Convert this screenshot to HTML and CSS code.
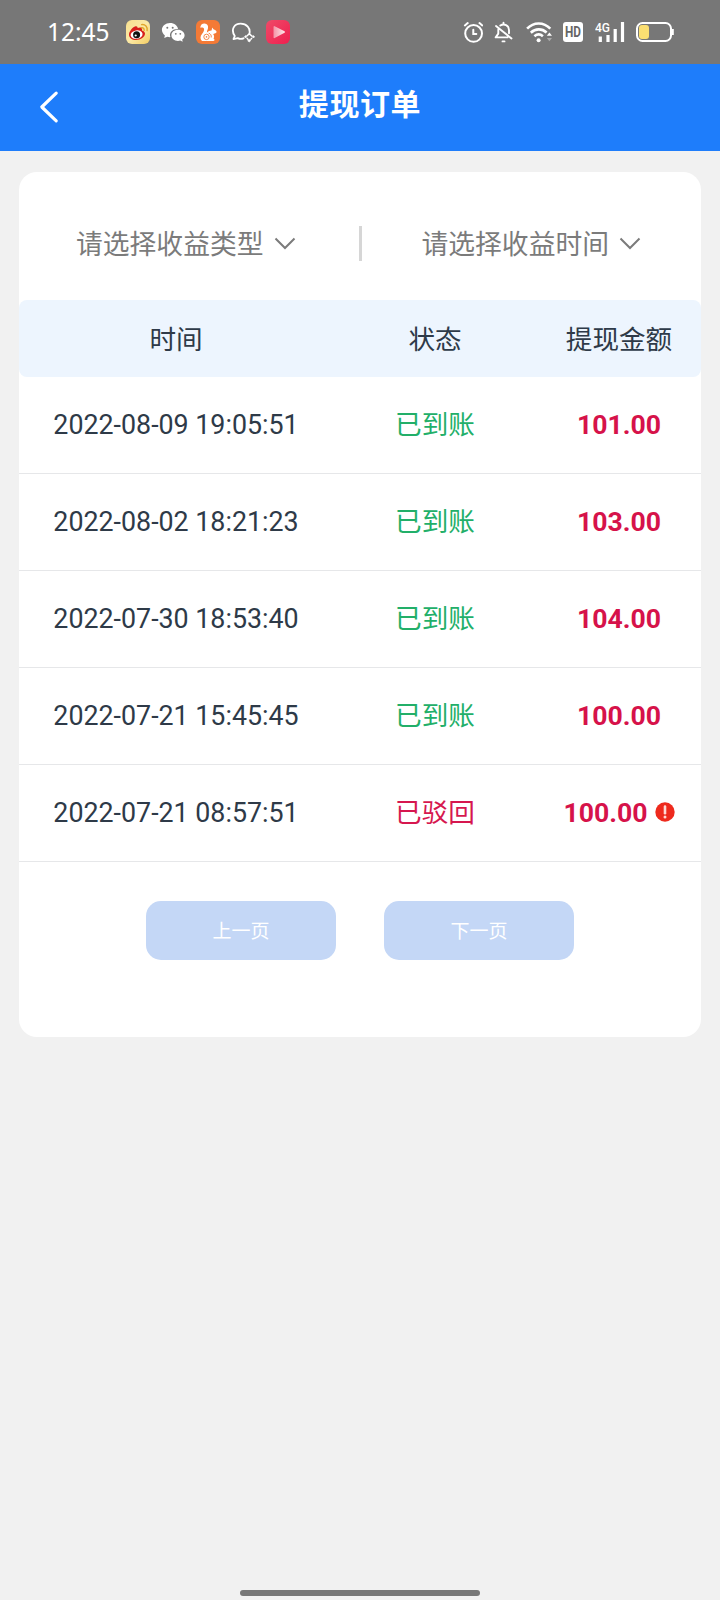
FILE: index.html
```html
<!DOCTYPE html>
<html lang="zh-CN">
<head>
<meta charset="utf-8">
<title>提现订单</title>
<link rel="stylesheet" href="styles.css">
</head>
<body>
<div class="status-bar">
  <span class="clock">12:45</span>
  <div class="apps">
    <svg width="24" height="24" viewBox="0 0 24 24">
      <defs><linearGradient id="gold" x1="0" y1="0" x2="1" y2="1"><stop offset="0" stop-color="#f8df8f"/><stop offset=".5" stop-color="#fbe9a6"/><stop offset="1" stop-color="#f3cc62"/></linearGradient></defs>
      <rect width="24" height="24" rx="6" fill="url(#gold)"/>
      <path d="M9 6.400c1.800-.6 2.800.1 2.600 1.700 2.300-.9 4.600-.7 4.500 1.300 0 .5-.1.7-.2 1 2 .6 3.100 1.700 3.100 3.200 0 3.500-4.300 6.400-8.800 6.400C6 20 3 17.700 3 14.700 3 11.600 6 7.600 9 6.400z" fill="#d81e1b"/>
      <ellipse cx="10.600" cy="14.600" rx="6" ry="4.200" fill="#fff" transform="rotate(-8 10.600 14.600)"/>
      <circle cx="10.600" cy="14.700" r="3.500" fill="#111"/>
      <circle cx="9.700" cy="15.500" r="1.100" fill="#fff"/>
      <path d="M15.500 7.800c1.600-.3 2.900.9 2.600 2.600M15.600 4.600c3.700-.5 6.200 2.200 5.500 6" fill="none" stroke="#e0a52b" stroke-width="1.400" stroke-linecap="round"/>
    </svg>
    <svg width="24" height="24" viewBox="0 0 24 24">
      <path d="M9 2.900c4.300 0 7.700 2.600 8 6.100-4.600-.3-8.300 2.600-8 6.600.1.600.2 1 .4 1.500-1 .1-2-.1-3-.4L3.200 18l.7-2.600C2 14 .9 12 .9 9.800.9 6 4.500 2.900 9 2.900z" fill="#fff"/>
      <path d="M17 9.800c3.700 0 6.600 2.500 6.600 5.500 0 1.800-.9 3.300-2.400 4.300l.5 2.200-2.500-1.200c-.7.200-1.400.3-2.200.3-3.700 0-6.600-2.500-6.600-5.600s2.900-5.500 6.600-5.500z" fill="#fff"/>
      <g fill="#777"><circle cx="6.300" cy="7.700" r="1"/><circle cx="11.700" cy="7.700" r="1"/><circle cx="14.800" cy="13.800" r=".9"/><circle cx="19.300" cy="13.800" r=".9"/></g>
    </svg>
    <svg width="24" height="24" viewBox="0 0 24 24">
      <rect width="24" height="24" rx="6" fill="#f47a36"/>
      <path d="M4.300 7.800C4.300 5 6.300 3.500 8.600 3.600c2.700.2 3.900 2.300 3.400 4.700-.4 1.800-1.300 2.800-1 4.300 1.200-1.500 3-2.300 4.600-2.200l.6-2.800 1.300 1.700c1.500.4 2.700 1.400 3.200 2.700-.7 1.300-1.700 1.600-2.900 1.700l-.6.600c1.200 1.500 1.100 2.900.4 4.400l1.200 1.200-1.300 1H6c-2-1.900-2-4.600 0-7 1.700-2 2.500-3.900 1.900-5.400C7.300 7.400 5.700 7.300 4.300 7.800z" fill="#fff"/>
      <circle cx="10.500" cy="16.900" r="2.700" fill="none" stroke="#f47a36" stroke-width=".9"/>
      <circle cx="10.500" cy="16.900" r=".8" fill="#f47a36"/>
      <path d="M12.700 13.200c1.900.5 2.900 2.200 2.500 4.300" fill="none" stroke="#f47a36" stroke-width=".9"/>
    </svg>
    <svg width="24" height="24" viewBox="0 0 24 24">
      <path d="M12.500 18.300c-2.300.9-4.100.6-5.700-.2l-4.300 1 1.300-3.200C-.6 9.600 3.300 3.700 9.700 3.700c6 0 9.900 4.600 8.800 9.800" fill="none" stroke="#fff" stroke-width="1.800" stroke-linejoin="round" stroke-linecap="round"/>
      <path d="M13.400 16.800l1.200-1.200 1.200 1.200-1.200 1.200zM21.200 16.800l1.200-1.200 1.200 1.200-1.200 1.200zM16.700 20.700l1.500-1.400 1.500 1.400-1.500 1.200z" fill="#fff" stroke="#fff" stroke-width=".7"/>
      <path d="M15.500 16.200l2.700-2.300 3.200 2.500M15.700 18l1.700 1.700M21 18l-1.600 1.700" fill="none" stroke="#fff" stroke-width="1.400" stroke-linejoin="round"/>
    </svg>
    <svg width="24" height="24" viewBox="0 0 24 24">
      <defs><linearGradient id="rose" x1="0" y1="0" x2="1" y2="1"><stop offset="0" stop-color="#ef4a68"/><stop offset="1" stop-color="#ee1f4f"/></linearGradient><linearGradient id="pale"><stop offset="0" stop-color="#f59aac"/><stop offset="1" stop-color="#fde3e7"/></linearGradient></defs>
      <rect width="24" height="24" rx="6" fill="url(#rose)"/>
      <path d="M8.300 6.800v10.600L18.200 12z" fill="url(#pale)" stroke="url(#pale)" stroke-width="1.500" stroke-linejoin="round"/>
    </svg>
  </div>
  <div class="signals">
    <svg width="22" height="24" viewBox="0 0 22 24" fill="none" stroke="#fff" stroke-width="2" stroke-linecap="round">
      <circle cx="12.600" cy="13.400" r="8.400"/><path d="M12.300 9.700v4.200h3M3.900 5.400l2.800-2.300M21.300 5.400l-2.800-2.300"/>
    </svg>
    <svg width="22" height="24" viewBox="0 0 22 24" fill="none" stroke="#fff" stroke-width="1.900" stroke-linecap="round" stroke-linejoin="round">
      <path d="M10.500 2.700v1.400M7.300 5.500c3.800-2.300 8.700-.2 8.700 4.600v3.200M5.300 9.400v4.200l-2.600 3.800h11.800M3 6l15.500 12.500"/><path d="M9.500 21.400h2"/>
    </svg>
    <svg width="28" height="24" viewBox="0 0 28 24" fill="none" stroke="#fff" stroke-width="2.600">
      <path d="M2.100 8.700c6.500-6.900 16.600-6.900 23.200 0M5.800 12.700c4.700-4.400 11.200-4.400 15.800-.2M9.400 16.300c2.700-2.300 5.900-2.300 8.500 0"/>
      <circle cx="13.600" cy="20.200" r="2" fill="#fff" stroke="none"/>
      <path d="M21.800 15.800l2.600-3.200 2.600 3.200z" fill="#fff" stroke="none"/><path d="M21.800 18l2.600 3.200 2.600-3.200z" fill="#aaa" stroke="none"/>
    </svg>
    <svg width="22" height="24" viewBox="0 0 22 24">
      <rect y="2" width="20" height="20" rx="3" fill="#fff"/>
      <text class="hd" x="10" y="17.300" text-anchor="middle" textLength="16" lengthAdjust="spacingAndGlyphs">HD</text>
    </svg>
    <svg width="30" height="24" viewBox="0 0 30 24">
      <text class="net" x="0" y="12.400" textLength="15" lengthAdjust="spacingAndGlyphs">4G</text>
      <path d="M5.300 16.500V22M13 15v7M20.200 9v13M27.500 2v20" stroke="#fff" stroke-width="3.200"/>
    </svg>
    <svg width="39" height="24" viewBox="0 0 39 24">
      <rect x="2" y="3" width="34" height="18" rx="5.500" fill="none" stroke="#fff" stroke-width="2"/>
      <rect x="4" y="5" width="10" height="14" rx="3" fill="#fbdf72"/>
      <path d="M37.800 9v6" stroke="#fff" stroke-width="2"/>
    </svg>
  </div>
</div>

<header class="nav">
  <svg class="back" width="22" height="34" viewBox="0 0 22 34"><path d="M18.200 3.200L3.800 17 18.200 30.800" fill="none" stroke="#fff" stroke-width="3.200" stroke-linecap="round" stroke-linejoin="round"/></svg>
  <h1 class="title">提现订单</h1>
</header>

<main class="card">
  <div class="filters">
    <div class="filter"><span class="label">请选择收益类型</span><svg class="chevron" width="22" height="14" viewBox="0 0 22 14"><path d="M1.500 1.500l9.500 9.500 9.500-9.500"/></svg></div>
    <div class="divider"></div>
    <div class="filter"><span class="label">请选择收益时间</span><svg class="chevron" width="22" height="14" viewBox="0 0 22 14"><path d="M1.500 1.500l9.500 9.500 9.500-9.500"/></svg></div>
  </div>
  <div class="row head"><span>时间</span><span>状态</span><span>提现金额</span></div>
  <div class="row"><span class="time">2022-08-09 19:05:51</span><span class="state ok">已到账</span><span class="amount">101.00</span></div>
  <div class="row"><span class="time">2022-08-02 18:21:23</span><span class="state ok">已到账</span><span class="amount">103.00</span></div>
  <div class="row"><span class="time">2022-07-30 18:53:40</span><span class="state ok">已到账</span><span class="amount">104.00</span></div>
  <div class="row"><span class="time">2022-07-21 15:45:45</span><span class="state ok">已到账</span><span class="amount">100.00</span></div>
  <div class="row"><span class="time">2022-07-21 08:57:51</span><span class="state rejected">已驳回</span><span class="amount">100.00<svg width="20" height="20" viewBox="0 0 20 20"><circle cx="10" cy="10" r="9.700" fill="#ee2a1d"/><path d="M10 4.500v6.700" stroke="#ffd9d4" stroke-width="2.600" stroke-linecap="round"/><circle cx="10" cy="14.900" r="1.500" fill="#ffd9d4"/></svg></span></div>
  <div class="pager">
    <button class="page-btn" disabled>上一页</button>
    <button class="page-btn" disabled>下一页</button>
  </div>
</main>
<div class="home-bar"></div>
</body>
</html>
```
FILE: styles.css
```css
* { box-sizing: border-box; }
body {
  margin: 0;
  min-height: 1600px;
  display: flex;
  flex-direction: column;
  background: #f1f1f1;
  font-family: Roboto, "Noto Sans CJK SC", sans-serif;
  font-size: 26.6px;
  color: #2e3a48;
}
svg { display: block; flex: none; }
.status-bar {
  height: 64px;
  padding: 0 46px;
  display: flex;
  align-items: center;
  background: #777;
}
.clock {
  width: 80px;
  padding-left: 1px;
  font: 24.5px/64px "Noto Sans", sans-serif;
  color: #fff;
}
.apps { display: flex; gap: 11px; }
.signals { display: flex; gap: 10px; margin-left: auto; }
.hd { font: bold 15px Roboto, sans-serif; fill: #666; }
.net { font: 500 13.5px Roboto, sans-serif; fill: #fff; }

.nav {
  height: 87px;
  padding: 0 38px 6px;
  display: grid;
  grid-template-columns: 22px 1fr 22px;
  align-items: center;
  background: #1e7dfb;
}
.back { margin-top: 4px; }
.title {
  margin: 0;
  text-align: center;
  font-size: 30px;
  line-height: 44px;
  font-weight: 700;
  letter-spacing: .6px;
  color: #fff;
}

.card {
  margin: 21px 19px 0;
  height: 865px;
  border-radius: 18px;
  background: #fff;
}
.filters {
  height: 128px;
  padding-top: 15px;
  display: grid;
  grid-template-columns: 1fr 3px 1fr;
  align-items: center;
}
.filter {
  display: flex;
  align-items: center;
  justify-content: center;
  gap: 10px;
  padding-right: 6px;
  font-size: 26.8px;
  color: #7b7b7b;
}
.label { padding-bottom: 3px; }
.divider + .filter { padding: 0; }
.chevron { fill: none; stroke: #7b7b7b; stroke-width: 2; }
.divider { height: 35px; background: #d6d6d6; }

.row {
  height: 97px;
  display: grid;
  grid-template-columns: 314px 204px 164px;
  align-items: center;
  justify-items: center;
  border-bottom: 1px solid #e6e7e9;
}
.head {
  height: 77px;
  padding-bottom: 3px;
  border: 0;
  border-radius: 8px;
  background: #edf5fe;
}
.time { font-size: 26.8px; }
.state { padding-bottom: 5px; }
.ok { color: #22af69; }
.rejected { color: #d6174f; }
.amount {
  display: flex;
  align-items: center;
  gap: 7px;
  padding-bottom: 2px;
  font-weight: 700;
  color: #d6124a;
}
.pager {
  display: flex;
  justify-content: center;
  gap: 48px;
  padding-top: 39px;
}
.page-btn {
  width: 190px;
  height: 59px;
  padding: 0 0 2px;
  border: 0;
  border-radius: 15px;
  background: #c4d7f6;
  font: 19px "Noto Sans CJK SC", sans-serif;
  color: #fff;
}
.home-bar {
  width: 240px;
  height: 6px;
  margin: auto auto 4px;
  border-radius: 3px;
  background: #777;
}
```
